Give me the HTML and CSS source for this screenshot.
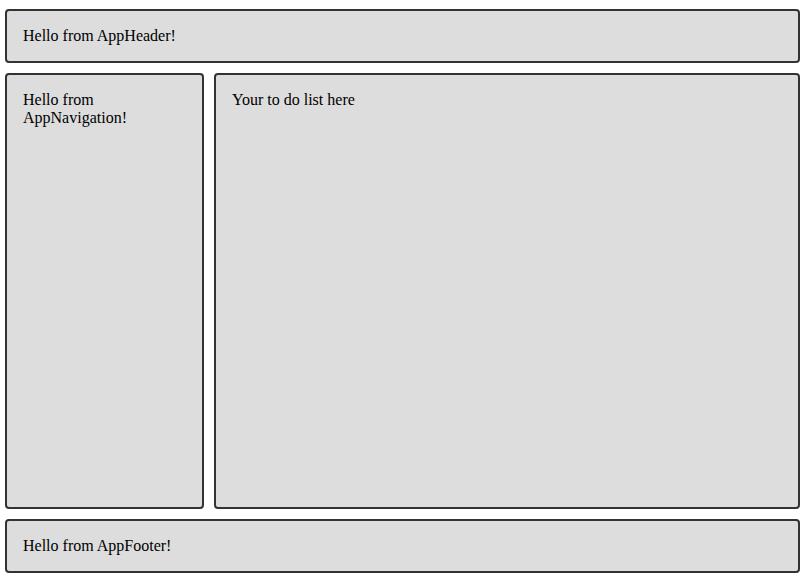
FILE: index.html
```html
<!DOCTYPE html>
<html>
<head>
<meta charset="utf-8">
<link rel="stylesheet" href="styles.css">
</head>
<body>
<div class="app">
  <header class="box header">Hello from AppHeader!</header>
  <nav class="box nav">Hello from AppNavigation!</nav>
  <main class="box main">Your to do list here</main>
  <footer class="box footer">Hello from AppFooter!</footer>
</div>
</body>
</html>
```
FILE: styles.css
```css
html, body {
  margin: 0;
  padding: 0;
  height: 100%;
}
body {
  font-family: "Liberation Serif", "Times New Roman", serif;
  font-size: 16px;
  color: #000;
  background: #fff;
}
.app {
  box-sizing: border-box;
  height: 580px;
  padding: 9px 5px 7px 5px;
  display: grid;
  grid-template-columns: 199px 1fr;
  grid-template-rows: 54px 1fr 54px;
  gap: 10px;
}
.box {
  box-sizing: border-box;
  background: #dddddd;
  border: 2px solid #333333;
  border-radius: 4px;
  padding: 16px;
  line-height: 18px;
}
.header, .footer {
  grid-column: 1 / 3;
}
```
